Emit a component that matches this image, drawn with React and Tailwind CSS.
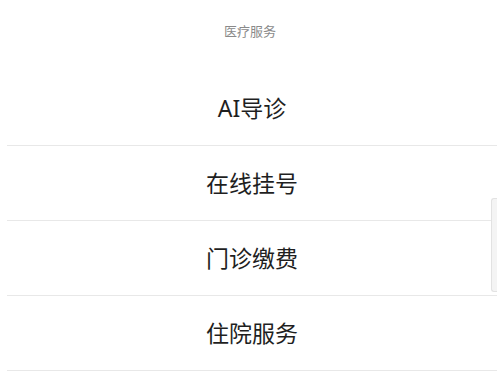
const items = ['AI导诊', '在线挂号', '门诊缴费', '住院服务']

function App() {
  return (
    <div
      className="relative w-[500px] h-[375px] bg-white overflow-hidden"
      style={{ fontFamily: '"Noto Sans", "Noto Sans CJK SC", sans-serif' }}
    >
      <div className="h-[71px] flex justify-center pt-[22px]">
        <span className="text-[13px] leading-[18px] text-[#8a8a8a]">医疗服务</span>
      </div>
      <ul className="ml-[7px] mr-[3px]">
        {items.map((item) => (
          <li
            key={item}
            className="h-[75px] flex items-center justify-center border-b border-[#e8e8e8] text-[23px] text-[#1f1f1f] pt-[1px]"
          >
            {item}
          </li>
        ))}
      </ul>
      <div className="absolute right-[3px] top-[198px] w-[6px] h-[94px] rounded-l-[3px] border border-r-0 border-[#e2e2e2] bg-[#f4f4f4]" />
    </div>
  )
}

export default App
